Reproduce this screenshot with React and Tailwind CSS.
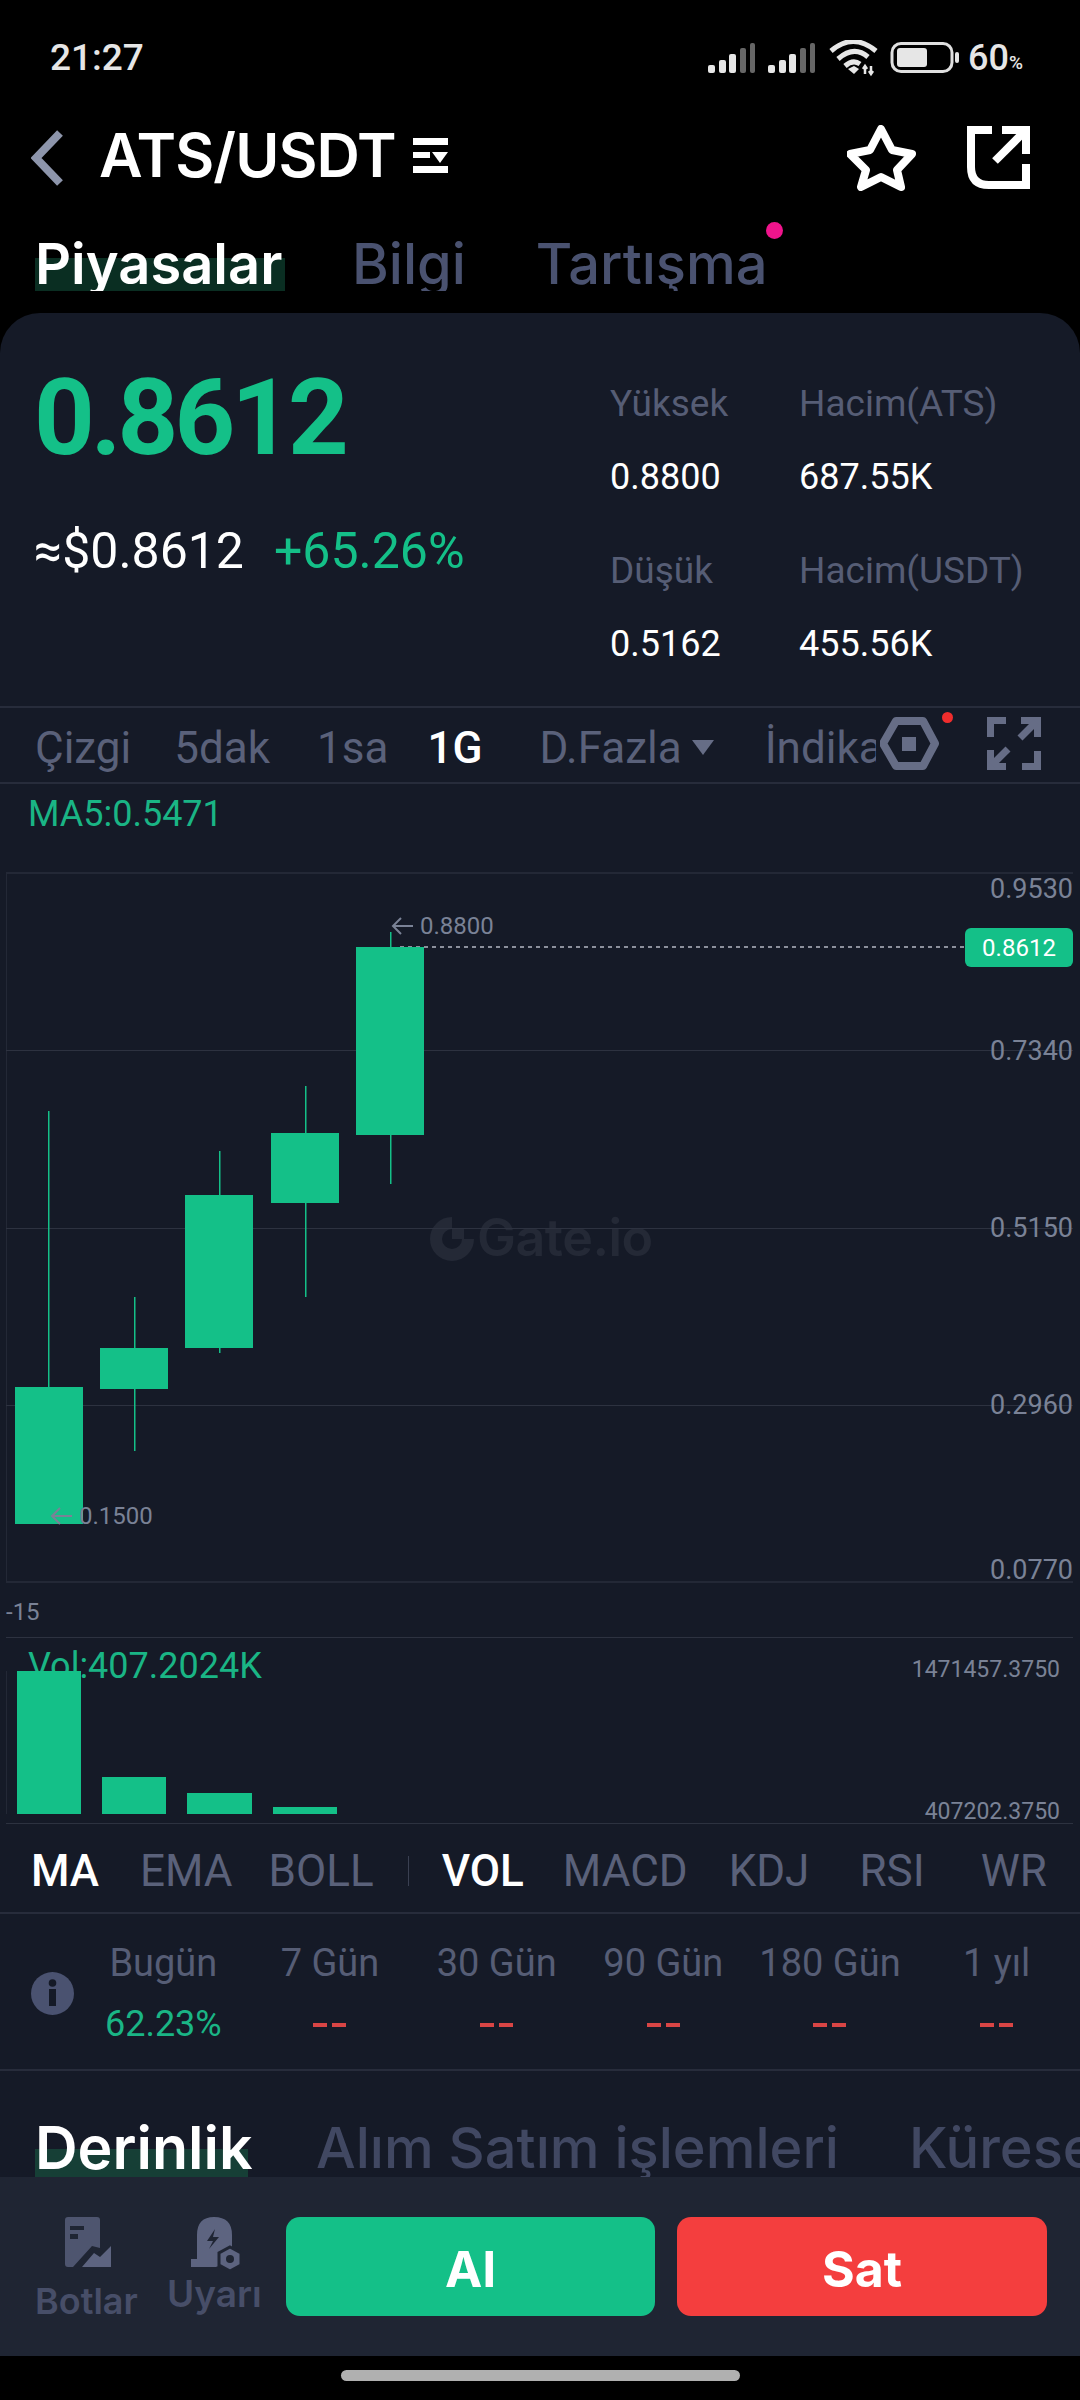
import React from 'react';

const GREEN = '#14c088';

const candles = [
  { x: 15, w: 68, top: 1387, bottom: 1524, wx: 48, wTop: 1111, wBottom: 1387 },
  { x: 100, w: 68, top: 1348, bottom: 1389, wx: 134, wTop: 1297, wBottom: 1451 },
  { x: 185, w: 68, top: 1195, bottom: 1348, wx: 219, wTop: 1151, wBottom: 1353 },
  { x: 271, w: 68, top: 1133, bottom: 1203, wx: 305, wTop: 1086, wBottom: 1297 },
  { x: 356, w: 68, top: 947, bottom: 1135, wx: 390, wTop: 932, wBottom: 1184 },
];

const volumes = [
  { x: 17, w: 64, top: 1671 },
  { x: 102, w: 64, top: 1777 },
  { x: 187, w: 65, top: 1793 },
  { x: 273, w: 64, top: 1807 },
];

const gridLines = [1050, 1228, 1405];
const axisLabels = [
  { text: '0.9530', top: 'top-[87px]' },
  { text: '0.7340', top: 'top-[249px]' },
  { text: '0.5150', top: 'top-[426px]' },
  { text: '0.2960', top: 'top-[603px]' },
  { text: '0.0770', top: 'top-[768px]' },
];

const periods = [
  { label: 'Bugün', value: '62.23%' },
  { label: '7 Gün' },
  { label: '30 Gün' },
  { label: '90 Gün' },
  { label: '180 Gün' },
  { label: '1 yıl' },
];

function SignalBars({ dx }) {
  const bars = [
    [708, 65, 7, 8, '#e6e6e6'],
    [719, 60, 7, 13, '#e6e6e6'],
    [729, 54, 7, 19, '#e6e6e6'],
    [740, 48, 6, 25, '#666666'],
    [750, 43, 5, 30, '#666666'],
  ];
  return bars.map(([x, y, w, h, c]) => (
    <rect key={x} x={x - 708 + dx} y={y - 40} width={w} height={h} rx="2" fill={c} />
  ));
}

function ArrowLeft() {
  return (
    <svg width="22" height="20" viewBox="0 0 22 20" className="shrink-0">
      <path d="M22 10 H2 M10 2 L2 10 L10 18" fill="none" stroke="#7a8296" strokeWidth="2" />
    </svg>
  );
}

function StatusBar() {
  return (
    <div className="h-[100px] relative shrink-0 flex items-start justify-between pl-[50px] pr-[57px] pt-[36px] text-[#e6e6e6]">
      <span className="text-[37px] leading-[44px] font-medium">21:27</span>
      <div className="flex items-start">
        <svg width="260" height="40" viewBox="0 0 260 40" className="mt-[4px]">
          <SignalBars dx={0} />
          <SignalBars dx={60} />
          <g fill="none" stroke="#e6e6e6" strokeWidth="5">
            <path d="M123 11 Q145 -8 168 11" />
            <path d="M130 19 Q146 5 160 17" />
            <path d="M137 26 Q145 19 152 24" />
          </g>
          <path d="M140 29 L146 26 L151 29 L146 34 Z" fill="#e6e6e6" />
          <path d="M157 26 V34 M155 29 L157 26 L159 29 M163 26 V34 M161 31 L163 34 L165 31" stroke="#e6e6e6" strokeWidth="2.5" fill="none" />
          <rect x="184" y="3.5" width="60" height="28" rx="9" fill="none" stroke="#e0e0e0" strokeWidth="3" />
          <rect x="189" y="8" width="30" height="19" rx="3" fill="#e6e6e6" />
          <rect x="247" y="12" width="4" height="11" rx="2" fill="#e6e6e6" />
        </svg>
        <span className="text-[36px] leading-[44px] font-medium">60</span>
        <span className="text-[19px] leading-[44px] font-medium mt-[5px]">%</span>
      </div>
    </div>
  );
}

function Header() {
  return (
    <div className="h-[115px] shrink-0 flex items-center pl-[31px] pr-[49px]">
      <svg width="33" height="56" viewBox="31 126 33 56">
        <path d="M60 129 L36 154 L60 179" fill="none" stroke="#8d95ab" strokeWidth="8" />
      </svg>
      <span className="ml-[35px] -mt-[5px] text-[60px] leading-[64px] font-semibold text-white font-[Inter,sans-serif] tracking-[-0.9px]">ATS/USDT</span>
      <svg width="36" height="36" viewBox="413 135 36 36" className="ml-[17px] -mt-[4px]">
        <rect x="413" y="135" width="35" height="7" fill="#fff" />
        <rect x="413" y="149" width="17" height="6" fill="#fff" />
        <path d="M432 149 H448 L440 160 Z" fill="#fff" />
        <rect x="413" y="163" width="35" height="7" fill="#fff" />
      </svg>
      <svg width="70" height="66" viewBox="848 118 70 66" className="ml-auto">
        <path d="M882 122 L893 143 L913 147 L898 163 L902 180 L882 170 L862 180 L867 163 L851 147 L871 143 Z" fill="none" stroke="#fff" strokeWidth="8" strokeLinejoin="round" />
      </svg>
      <svg width="64" height="64" viewBox="968 120 64 64" className="ml-[50px]">
        <g fill="none" stroke="#fff" strokeWidth="8">
          <path d="M993 124 H972 V161 Q972 179 990 179 H1027 V158" />
          <path d="M1003 124 H1027 V148" />
          <path d="M996 155 L1026 125" />
        </g>
      </svg>
    </div>
  );
}

function TopTabs() {
  return (
    <div className="h-[76px] shrink-0 overflow-hidden flex items-start relative pl-[35px] pt-[15px] font-[Inter,sans-serif] text-[56px] leading-[68px] font-semibold text-[#4a5270]">
      <div className="relative w-[250px] h-[61px]">
        <div className="absolute left-0 right-0 top-[28px] h-[33px] bg-[#0a2e22]" />
        <span className="relative text-white">Piyasalar</span>
      </div>
      <span className="ml-[67px] font-medium">Bilgi</span>
      <span className="ml-[70px] font-medium">Tartışma</span>
      <span className="absolute left-[766px] top-[7px] w-[17px] h-[17px] rounded-full bg-[#f0148c]" />
    </div>
  );
}

function Stat({ label, value, className }) {
  return (
    <div className={className}>
      <div className="text-[37px] leading-[40px] text-[#565d75]">{label}</div>
      <div className="text-[36px] leading-[40px] text-white mt-[33px]">{value}</div>
    </div>
  );
}

function Summary() {
  return (
    <div className="h-[393px] shrink-0 flex relative">
      <div className="w-[610px] pl-[34px] pt-[47px] shrink-0">
        <div className="text-[106px] leading-[116px] font-bold -tracking-[4px]" style={{ color: GREEN }}>0.8612</div>
        <div className="flex items-center mt-[45px] h-[60px] text-[50px]">
          <span className="text-white">≈$0.8612</span>
          <span className="ml-[30px]" style={{ color: GREEN }}>+65.26%</span>
        </div>
      </div>
      <div className="pt-[71px] w-[189px] shrink-0">
        <Stat label="Yüksek" value="0.8800" />
        <Stat label="Düşük" value="0.5162" className="mt-[54px]" />
      </div>
      <div className="pt-[71px]">
        <Stat label="Hacim(ATS)" value="687.55K" />
        <Stat label="Hacim(USDT)" value="455.56K" className="mt-[54px]" />
      </div>
    </div>
  );
}

function PeriodBar() {
  return (
    <div className="h-[78px] shrink-0 border-y-2 border-[#272c3b] flex items-center relative overflow-hidden pl-[35px] pt-[5px] text-[44px] text-[#5a617a]">
      <span>Çizgi</span>
      <span className="ml-[43px]">5dak</span>
      <span className="ml-[47px]">1sa</span>
      <span className="ml-[39px] text-white font-medium">1G</span>
      <span className="ml-[57px]">D.Fazla</span>
      <svg width="22" height="15" viewBox="0 0 22 15" className="ml-[10px]">
        <path d="M0 0 H22 L11 15 Z" fill="#666d86" />
      </svg>
      <div className="ml-[51px] w-[111px] overflow-hidden whitespace-nowrap">İndikatörler</div>
      <svg width="200" height="76" viewBox="880 707 200 76" className="absolute left-[880px] top-0">
        <path d="M883 742.5 L896 720 H923 L935 742.5 L923 765 H896 Z" fill="none" stroke="#666d86" strokeWidth="8" strokeLinejoin="round" />
        <rect x="902" y="736" width="14" height="14" fill="#666d86" />
        <circle cx="947.5" cy="716.5" r="5.5" fill="#f02d2d" />
        <g fill="none" stroke="#666d86" strokeWidth="7">
          <path d="M990.5 736 V719.5 H1006" />
          <path d="M1021 719.5 H1037.5 V736" />
          <path d="M1036 721 L1020 737" />
          <path d="M990.5 749 V765.5 H1006" />
          <path d="M992 764 L1008 748" />
          <path d="M1022 765.5 H1037.5 V750" />
        </g>
      </svg>
    </div>
  );
}

function Chart() {
  return (
    <div className="h-[1040px] shrink-0 relative overflow-hidden">
      <span className="absolute left-[28px] top-[10px] text-[36px] leading-[40px] text-[#1ab585]">MA5:0.5471</span>
      <span className="absolute left-[28px] top-[862px] text-[36px] leading-[40px] text-[#1ab585]">Vol:407.2024K</span>
      <span className="absolute left-[477px] top-[424px] text-[52px] leading-[60px] font-semibold text-[#242936] font-[Inter,sans-serif] -tracking-[0.5px]">Gate.io</span>
      <svg width="1080" height="1040" viewBox="0 784 1080 1040" className="absolute left-0 top-0">
        <path d="M452 1223 A16 16 0 1 0 468 1239" fill="none" stroke="#242936" strokeWidth="12" />
        <rect x="452" y="1228" width="12" height="11" fill="#242936" />
        <rect x="6" y="872" width="1067" height="2" fill="#232836" />
        <rect x="6" y="873" width="1" height="709" fill="#232836" />
        <rect x="6" y="1581" width="1067" height="2" fill="#232836" />
        {gridLines.map(y => <rect key={y} x="6" y={y} width="1067" height="1" fill="#2d3240" />)}
        <rect x="6" y="1637" width="1067" height="1" fill="#2d3240" />
        <rect x="6" y="1671" width="1" height="143" fill="#232836" />
        <rect x="6" y="1823" width="1067" height="1" fill="#2d3240" />
        <path d="M400 947 H965" stroke="#b4b8c4" strokeWidth="1.5" strokeDasharray="4 4" />
        {candles.map(c => (
          <g key={c.x} fill={GREEN}>
            <rect x={c.wx} y={c.wTop} width="1.5" height={c.wBottom - c.wTop} />
            <rect x={c.x} y={c.top} width={c.w} height={c.bottom - c.top} />
          </g>
        ))}
        {volumes.map(v => <rect key={v.x} x={v.x} y={v.top} width={v.w} height={1814 - v.top} fill={GREEN} />)}
      </svg>
      {axisLabels.map(a => (
        <span key={a.text} className={`absolute right-[7px] ${a.top} text-[27px] leading-[36px] text-[#7a8296]`}>{a.text}</span>
      ))}
      <div className="absolute left-[391px] top-[127px] flex items-center gap-[7px] text-[24px] leading-[30px] text-[#7a8296]">
        <ArrowLeft />
        <span>0.8800</span>
      </div>
      <div className="absolute left-[50px] top-[717px] flex items-center gap-[7px] text-[24px] leading-[30px] text-[#7a8296]">
        <ArrowLeft />
        <span>0.1500</span>
      </div>
      <span className="absolute left-[965px] right-[7px] top-[144px] h-[39px] rounded-[6px] flex items-center justify-center text-[24px] text-white" style={{ backgroundColor: GREEN }}>0.8612</span>
      <span className="absolute left-[6px] top-[813px] text-[24px] leading-[30px] text-[#7a8296]">-15</span>
      <span className="absolute right-[20px] top-[871px] text-[23px] leading-[30px] text-[#7a8296]">1471457.3750</span>
      <span className="absolute right-[20px] top-[1016px] text-[23px] leading-[24px] text-[#7a8296]">407202.3750</span>
    </div>
  );
}

function IndicatorBar() {
  return (
    <div className="h-[90px] shrink-0 flex items-center relative pl-[31px] pt-[5px] text-[44px] text-[#5a617a] border-b-2 border-[#272c3b]">
      <span className="text-white font-medium">MA</span>
      <span className="ml-[41px]">EMA</span>
      <span className="ml-[36px]">BOLL</span>
      <span className="ml-[34px] w-[1px] h-[30px] bg-[#3a4052]" />
      <span className="ml-[33px] text-white font-medium">VOL</span>
      <span className="ml-[39px]">MACD</span>
      <span className="ml-[41px]">KDJ</span>
      <span className="ml-[50px]">RSI</span>
      <span className="ml-[56px]">WR</span>
    </div>
  );
}

function PeriodReturns() {
  return (
    <div className="h-[157px] shrink-0 flex border-b-2 border-[#272c3b] pl-[31px]">
      <svg width="43" height="43" viewBox="0 0 43 43" className="mt-[58px] shrink-0">
        <circle cx="21.5" cy="21.5" r="21.5" fill="#4a5270" />
        <rect x="18" y="17" width="7" height="17" fill="#151a27" />
        <circle cx="21.5" cy="11" r="3.8" fill="#151a27" />
      </svg>
      <div className="grid grid-cols-6 w-[1000px] ml-[6px] pt-[27px] text-center">
        {periods.map(p => (
          <div key={p.label} className="flex flex-col items-center">
            <span className="text-[38px] leading-[44px] text-[#565d75]">{p.label}</span>
            {p.value
              ? <span className="text-[36px] leading-[44px] mt-[17px] text-[#1ab585]">{p.value}</span>
              : <div className="flex gap-[5px] mt-[38px]"><span className="w-[14px] h-[4px] bg-[#d94545]" /><span className="w-[14px] h-[4px] bg-[#d94545]" /></div>}
          </div>
        ))}
      </div>
    </div>
  );
}

function DepthTabs() {
  return (
    <div className="flex-1 overflow-hidden flex items-start pl-[35px] pt-[43px] font-[Inter,sans-serif] text-[56px] leading-[68px] font-medium text-[#414862] whitespace-nowrap">
      <div className="relative w-[213px] h-[67px] shrink-0">
        <div className="absolute left-0 right-0 top-[35px] h-[32px] bg-[#163f36]" />
        <span className="relative text-white font-semibold text-[59px]">Derinlik</span>
      </div>
      <span className="ml-[68px] shrink-0">Alım Satım işlemleri</span>
      <span className="ml-[70px] shrink-0">Küresel</span>
    </div>
  );
}

function BottomBar() {
  return (
    <div className="h-[179px] shrink-0 bg-[#1f2533] flex items-start pt-[40px] font-[Inter,sans-serif]">
      <div className="w-[143px] pl-[35px] shrink-0 flex flex-col">
        <svg width="47" height="51" viewBox="65 2216 47 51" className="ml-[30px]">
          <path d="M68 2216 H97 Q100 2216 100 2219 V2247 L92 2245 L73 2266 H68 Q65 2266 65 2263 V2219 Q65 2216 68 2216 Z" fill="#4e556f" />
          <rect x="70" y="2225" width="14" height="4" fill="#1f2533" />
          <rect x="70" y="2233" width="8" height="5" fill="#1f2533" />
          <path d="M82 2266 L94 2252 L100 2256 L111 2245 V2266 Z" fill="#5d6480" />
        </svg>
        <span className="text-[36px] leading-[44px] font-semibold text-[#474e68] mt-[11px]">Botlar</span>
      </div>
      <div className="w-[143px] pl-[24px] shrink-0 flex flex-col">
        <svg width="52" height="54" viewBox="189 2216 52 54" className="ml-[23px]">
          <path d="M196 2258 V2234 Q196 2216 213 2216 Q231 2216 231 2234 V2258 L215 2266 H190 V2258 Z" fill="#5d6480" />
          <path d="M214 2228 L206 2240 H212 L208 2248 L218 2236 H212 Z" fill="#1f2533" />
          <path d="M229 2246 L240 2252 V2264 L229 2270 L218 2264 V2252 Z" fill="#5d6480" stroke="#1f2533" strokeWidth="3" />
          <circle cx="229" cy="2258" r="4" fill="#1f2533" />
        </svg>
        <span className="text-[37px] leading-[44px] font-semibold text-[#474e68] mt-[1px]">Uyarı</span>
      </div>
      <button className="w-[369px] h-[99px] rounded-[14px] pt-[5px] text-[50px] font-bold text-white" style={{ backgroundColor: GREEN }}>Al</button>
      <button className="w-[370px] h-[99px] rounded-[14px] pt-[5px] ml-[22px] bg-[#f43e3e] text-[50px] font-bold text-white">Sat</button>
    </div>
  );
}

export default function App() {
  return (
    <div className="w-[1080px] h-[2400px] bg-black overflow-hidden flex flex-col font-[Roboto,sans-serif]">
      <StatusBar />
      <Header />
      <TopTabs />
      <div className="flex-1 mt-[22px] bg-[#151a27] rounded-t-[40px] flex flex-col overflow-hidden min-h-0">
        <Summary />
        <PeriodBar />
        <Chart />
        <IndicatorBar />
        <PeriodReturns />
        <DepthTabs />
      </div>
      <BottomBar />
      <div className="h-[44px] shrink-0 flex justify-center pt-[14px]">
        <div className="w-[399px] h-[11px] rounded-full bg-[#b0b0b0]" />
      </div>
    </div>
  );
}
